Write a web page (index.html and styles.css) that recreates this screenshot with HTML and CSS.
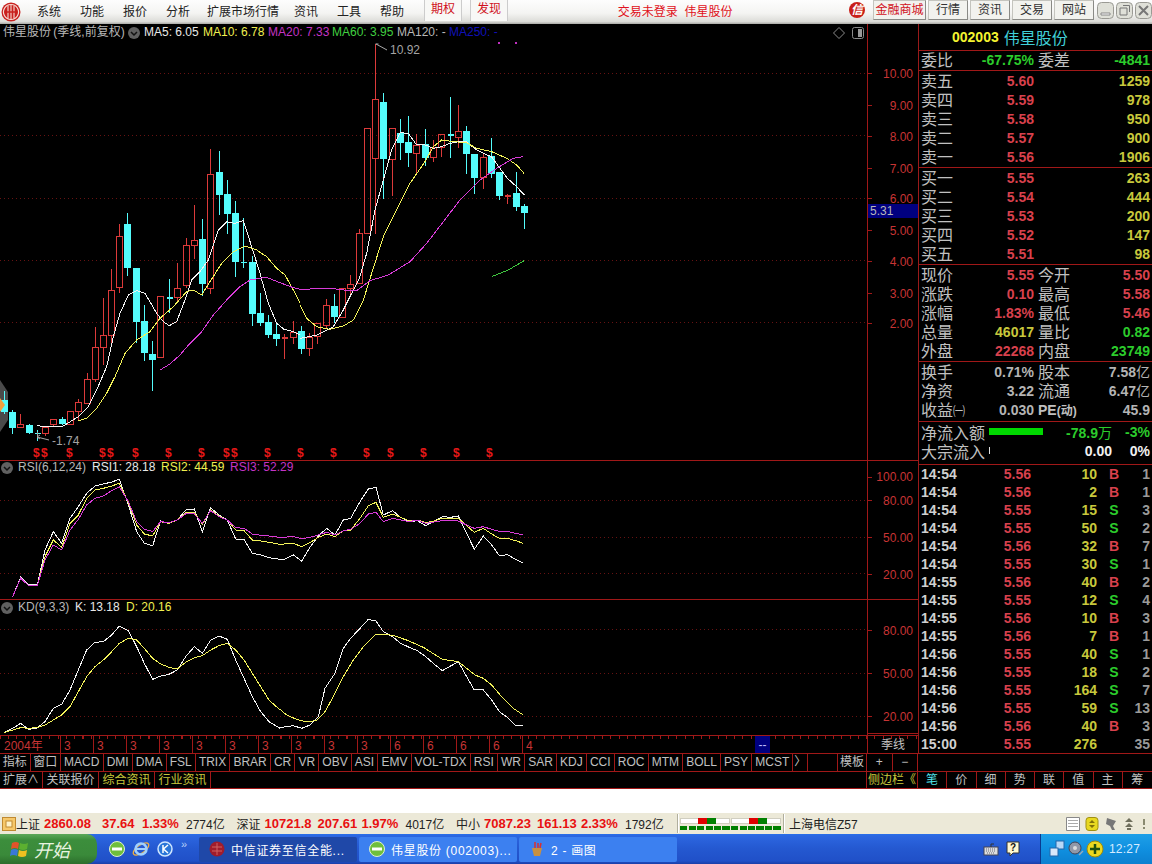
FILE: index.html
```html
<!DOCTYPE html>
<html lang="zh">
<head>
<meta charset="utf-8">
<title>伟星股份</title>
<link rel="stylesheet" href="styles.css">
</head>
<body>
<div class="app">
  <header class="menubar">
    <svg class="citic" viewBox="0 0 20 20" width="20" height="20"><circle cx="10" cy="10" r="9.500" fill="#c8201e"/><path d="M10 2.500a7.500 7.500 0 1 0 .01 0" fill="none" stroke="#f8dcd4" stroke-width="1.200"/><path d="M7 3.500v13M10 2.500v15M13 3.500v13" stroke="#f8dcd4" stroke-width="1.100" fill="none"/><path d="M3.500 10h13" stroke="#c8201e" stroke-width="1.500"/></svg>
    <nav class="menu">
      <span>系统</span><span>功能</span><span>报价</span><span>分析</span><span class="ext">扩展市场行情</span><span>资讯</span><span>工具</span><span>帮助</span>
    </nav>
    <span class="redtab first">期权</span><span class="redtab">发现</span>
    <span class="login">交易未登录&nbsp;&nbsp;伟星股份</span>
    <span class="xin">信</span>
    <span class="topbtn mall">金融商城</span><span class="topbtn">行情</span><span class="topbtn">资讯</span><span class="topbtn">交易</span><span class="topbtn">网站</span>
    <span class="winbtns">
      <svg class="winbtn" viewBox="0 0 17 17"><rect x=".5" y=".5" width="16" height="16" rx="4"/><path d="M4 11h9v2H4z" fill="#fff" stroke="#888"/></svg>
      <svg class="winbtn" viewBox="0 0 17 17"><rect x=".5" y=".5" width="16" height="16" rx="4"/><path d="M4 6h7v7H4zM7 3.500h6.500V10" fill="none" stroke="#777"/></svg>
      <svg class="winbtn" viewBox="0 0 17 17"><rect x=".5" y=".5" width="16" height="16" rx="4"/><path d="M4 4l9 9M13 4l-9 9" fill="none" stroke="#777" stroke-width="2"/></svg>
    </span>
  </header>

  <div class="workspace">
    <div class="left">
      <svg class="chart" viewBox="0 24 918 712" width="918" height="712">
        <!-- grid -->
        <g class="grid">
          <path d="M0 73.500H867M0 135.500H867M0 198.500H867M0 260.500H867M0 322.500H867"/>
          <path d="M0 500.500H867M0 537.500H867M0 573.500H867"/>
          <path d="M0 629.500H867M0 673.500H867M0 716.500H867"/>
        </g>
        <g class="rule">
          <path d="M0 460.500H918M0 599.500H918M0 735.500H918M867.500 24V735M868 733.500H918"/>
          <path d="M867 73.500h5M867 105.500h5M867 136.500h5M867 168.500h5M867 198.500h5M867 230.500h5M867 261.500h5M867 293.500h5M867 323.500h5M867 477.500h5M867 500.500h5M867 537.500h5M867 574.500h5M867 630.500h5M867 673.500h5M867 716.500h5"/>
        </g>

        <!-- left hide-panel handle -->
        <path d="M0 380L8 392V420L0 432Z" fill="#4a4a4a"/>

        <!-- candles -->
        <g transform="translate(.5 .5)" class="candles">
          <path class="up" d="M20 413V424M17 424h6v3h-6zM45 425V427M45 433V435M42 427h6v6h-6zM53 424V426M50 419h6v5h-6zM67 411h6v13h-6zM78 398V402M78 411V420M75 402h6v9h-6zM87 372V379M84 379h6v24h-6zM95 326V347M95 379V381M92 347h6v32h-6zM103 297V335M103 347V364M100 335h6v12h-6zM111 268V290M111 335V343M108 290h6v45h-6zM119 223V236M119 287V292M116 236h6v51h-6zM157 296h6v61h-6zM177 262V288M177 297V302M174 288h6v9h-6zM186 237V245M186 285V287M183 245h6v40h-6zM194 204V240M194 245V258M191 240h6v5h-6zM210 148V174M210 288V293M207 174h6v114h-6zM293 320V332M293 337V343M290 332h6v5h-6zM309 332V337M309 348V355M306 337h6v11h-6zM317 322V323M317 336V343M314 323h6v13h-6zM326 298V305M326 325V328M323 305h6v20h-6zM339 288h6v29h-6zM350 274V284M350 288V295M347 284h6v4h-6zM359 228V233M356 233h6v50h-6zM364 128h6v105h-6zM375 43V99M375 158V233M372 99h6v59h-6zM389 128h6v31h-6zM392 159V195M416 133V145M416 153V174M413 145h6v8h-6zM433 139V147M433 157V161M430 147h6v10h-6zM438 134h6v13h-6zM441 147V156M458 104V131M458 137V147M455 131h6v6h-6zM483 152V157M483 177V188M480 157h6v20h-6zM284 333V358M281 337h6M281 338h6M507 193V203M504 195h6M504 196h6"/>
          <path class="down" d="M4 390V413M1 400h6v11H1zM12 409V433M9 412h6v15H9zM29 423V433M26 425h6v7h-6zM62 416V424M59 419h6v4h-6zM127 212V275M124 224h6v43h-6zM136 267V342M133 268h6v53h-6zM144 304V360M141 321h6v31h-6zM152 340V390M149 354h6v5h-6zM202 218V295M199 239h6v44h-6zM219 150V214M216 172h6v22h-6zM227 179V233M224 194h6v19h-6zM235 200V276M232 213h6v48h-6zM252 255V325M249 262h6v51h-6zM260 292V325M257 313h6v9h-6zM268 314V337M265 322h6v12h-6zM276 323V345M273 334h6v4h-6zM301 325V353M298 331h6v17h-6zM334 293V322M331 306h6v10h-6zM383 92V198M380 102h6v56h-6zM400 118V159M397 133h6v9h-6zM408 115V166M405 142h6v10h-6zM425 128V165M422 144h6v13h-6zM466 125V173M463 131h6v22h-6zM474 154V193M471 154h6v23h-6zM491 137V177M488 156h6v17h-6zM499 172V199M496 172h6v23h-6zM516 171V210M513 193h6v13h-6zM524 203V228M521 206h6v6h-6zM37 429V440M34 433h6M169 278V312M166 297h6M166 298h6M243 217V267M240 262h6M450 96V157M447 134h6M447 135h6"/>
        </g>
        <path d="M0 398L5 405L0 412Z" fill="#f0a040"/>

        <!-- moving averages -->
        <g class="ln">
          <polyline class="white" transform="translate(0 60) scale(.33333)" points="110,1097 140,1100 190,1098 235,1070 265,1040 290,990 320,920 340,830 360,760 385,705 410,692 435,700 470,760 490,785 508,797 530,785 555,720 575,660 600,635 625,600 655,510 680,485 705,490 730,482 755,560 780,640 805,730 830,790 852,808 880,815 900,825"/>
          <polyline class="white" transform="translate(300 40) scale(.33333)" points="0,895 28,890 50,885 100,860 130,810 155,760 178,715 200,640 225,510 250,420 275,330 300,278 325,280 350,315 376,315 400,325 425,320 450,310 475,305 499,305 523,325 550,340 574,350 600,385 622,415 650,440 673,465"/>
          <polyline class="yellow" transform="translate(0 60) scale(.33333)" points="235,1082 260,1075 290,1045 320,1000 345,950 375,880 410,840 450,815 480,775 520,740 560,695 580,690 605,705 630,665 665,610 700,575 735,558 770,570 800,590 830,625 855,645 880,690 900,730"/>
          <polyline class="yellow" transform="translate(300 40) scale(.33333)" points="0,795 20,835 50,860 90,868 130,858 160,840 190,780 215,700 250,590 290,510 330,430 375,365 400,320 425,300 460,305 499,308 530,325 575,335 620,355 650,375 672,400"/>
          <polyline class="magenta" transform="translate(0 60) scale(.33333)" points="480,930 510,912 540,885 570,850 605,815 640,765 680,720 720,680 750,660 800,652 840,668 880,683 900,688"/>
          <polyline class="magenta" transform="translate(300 40) scale(.33333)" points="0,750 50,745 95,745 130,750 170,752 210,722 265,705 330,665 380,610 430,545 480,480 540,420 590,385 640,355 670,350"/>
          <polyline class="green" transform="translate(300 40) scale(.33333)" points="575,710 625,690 672,662"/>
        </g>

        <!-- RSI -->
        <g class="ln">
          <polyline class="white" transform="translate(0 460) scale(.33333)" points="38,410 62,352 85,375 112,375 135,270 160,215 185,250 210,175 235,140 260,100 285,78 310,72 335,66 358,58 385,135 410,215 433,250 458,257 482,183 507,190 532,180 557,150 583,147 607,215 632,143 657,165 682,180 707,237 732,238 757,280 782,285 807,293 840,298"/>
          <polyline class="white" transform="translate(280 460) scale(.33333)" points="0,298 15,297 40,285 65,303 90,262 115,228 140,205 165,225 190,180 212,175 240,125 265,87 288,82 310,165 338,152 362,172 388,185 412,182 437,197 462,183 487,170 512,172 535,168 560,220 583,268 610,228 635,255 658,287 682,284 707,298 730,310"/>
          <polyline class="yellow" transform="translate(0 460) scale(.33333)" points="38,410 62,355 85,376 112,376 135,290 160,240 185,262 210,190 235,165 260,115 285,90 310,85 335,78 358,70 385,128 410,195 433,222 458,228 482,185 507,190 532,180 557,158 583,157 607,193 632,150 657,168 682,180 707,210 732,212 757,240 782,243 807,247 840,253"/>
          <polyline class="yellow" transform="translate(280 460) scale(.33333)" points="0,253 40,250 65,260 90,248 115,232 140,222 165,230 190,212 212,210 240,175 265,137 288,127 310,172 338,162 362,172 388,183 412,180 437,188 462,183 487,175 512,175 535,175 560,197 583,217 610,205 635,222 658,235 682,235 707,242 730,250"/>
          <polyline class="magenta" transform="translate(0 460) scale(.33333)" points="38,410 62,355 85,376 112,376 135,300 160,255 185,270 210,210 235,178 260,135 285,115 310,108 335,92 358,80 385,125 410,185 433,208 458,214 482,185 507,188 532,180 557,162 583,162 607,190 632,152 657,170 682,180 707,203 732,205 757,222 782,226 807,228 840,232"/>
          <polyline class="magenta" transform="translate(280 460) scale(.33333)" points="0,232 40,230 65,236 90,232 115,225 140,217 165,225 190,212 212,208 240,190 265,162 288,157 310,185 338,175 362,180 388,185 412,180 437,190 462,186 487,182 512,183 535,183 560,195 583,205 610,200 635,208 658,214 682,214 707,220 730,225"/>
        </g>

        <!-- KD -->
        <g class="ln">
          <polyline class="white" transform="translate(0 460) scale(.33333)" points="12,818 38,805 62,790 85,808 110,805 135,785 160,745 185,733 210,690 235,630 260,570 285,547 310,545 335,525 358,498 385,512 410,560 433,610 458,658 482,648 507,643 532,630 557,590 583,560 607,580 632,540 657,528 682,538 707,600 732,655 757,710 782,755 807,785 840,805"/>
          <polyline class="white" transform="translate(280 460) scale(.33333)" points="0,803 40,797 65,805 90,795 115,770 135,685 165,640 190,565 212,535 240,505 265,478 288,483 310,515 338,530 362,550 388,562 412,572 437,590 462,612 487,632 512,618 535,605 560,650 583,690 610,690 635,720 658,755 682,772 707,797 730,797"/>
          <polyline class="yellow" transform="translate(0 460) scale(.33333)" points="12,818 38,810 62,803 85,805 110,803 135,795 160,780 185,765 210,740 235,695 260,650 285,620 310,600 335,575 358,550 385,535 410,540 433,565 458,595 482,612 507,622 532,627 557,607 583,593 607,587 632,570 657,557 682,550 707,570 732,600 757,640 782,680 807,720 840,750"/>
          <polyline class="yellow" transform="translate(280 460) scale(.33333)" points="0,748 20,765 50,778 75,785 110,782 135,755 160,710 190,650 220,600 250,560 285,525 315,522 345,528 385,542 430,562 487,598 535,605 585,645 610,655 635,675 665,710 700,745 730,765"/>
        </g>

        <!-- price extremes -->
        <path class="note" d="M375.500 44h3M376 44l11 6M37.500 432v5M37 437l12 3M37 437l3-2M37 437l3 2"/>
        <text class="t gray" x="390" y="54">10.92</text>
        <text class="t gray" x="52" y="445">-1.74</text>
        <path d="M498 42h2v2h-2zM515 42h2v2h-2z" fill="#c030c0"/>

        <!-- $ markers -->
        <g class="t dollar">
          <text x="33" y="457">$</text><text x="41" y="457">$</text><text x="66" y="457">$</text><text x="99" y="457">$</text><text x="107" y="457">$</text><text x="132" y="457">$</text><text x="165" y="457">$</text><text x="198" y="457">$</text><text x="223" y="457">$</text><text x="231" y="457">$</text><text x="264" y="457">$</text><text x="297" y="457">$</text><text x="330" y="457">$</text><text x="363" y="457">$</text><text x="387" y="457">$</text><text x="420" y="457">$</text><text x="453" y="457">$</text><text x="486" y="457">$</text>
        </g>

        <!-- titles -->
        <text class="t lbl tight" x="3" y="36">伟星股份 (季线,前复权)</text>
        <g><circle class="chev" cx="134" cy="33" r="6"/><path class="chevmark" d="M131 32l3 3 3-3"/></g>
        <text class="t white" x="144" y="36">MA5: 6.05</text>
        <text class="t yellow" x="203" y="36">MA10: 6.78</text>
        <text class="t magenta" x="268" y="36">MA20: 7.33</text>
        <text class="t green" x="332" y="36">MA60: 3.95</text>
        <text class="t lbl" x="397" y="36">MA120: -</text>
        <text class="t blue" x="449" y="36">MA250: -</text>
        <path class="glyphicon" d="M839 27.500l5.500 5.500-5.500 5.500-5.500-5.500z"/>
        <rect class="glyphicon" x="852.500" y="27.500" width="11" height="11" rx="2"/><rect x="858" y="29" width="4" height="8" fill="#999"/>

        <g><circle class="chev" cx="7" cy="468" r="6"/><path class="chevmark" d="M4 467l3 3 3-3"/></g>
        <text class="t lbl" x="18" y="471">RSI(6,12,24)</text>
        <text class="t white" x="92" y="471">RSI1: 28.18</text>
        <text class="t yellow" x="161" y="471">RSI2: 44.59</text>
        <text class="t magenta" x="230" y="471">RSI3: 52.29</text>

        <g><circle class="chev" cx="7" cy="608" r="6"/><path class="chevmark" d="M4 607l3 3 3-3"/></g>
        <text class="t lbl" x="18" y="611">KD(9,3,3)</text>
        <text class="t white" x="75" y="611">K: 13.18</text>
        <text class="t yellow" x="126" y="611">D: 20.16</text>

        <!-- axis -->
        <g class="t axis">
          <text x="913" y="78">10.00</text><text x="913" y="110">9.00</text><text x="913" y="141">8.00</text><text x="913" y="173">7.00</text><text x="913" y="203">6.00</text><text x="913" y="235">5.00</text><text x="913" y="266">4.00</text><text x="913" y="298">3.00</text><text x="913" y="328">2.00</text>
          <text x="913" y="481">100.00</text><text x="913" y="505">80.00</text><text x="913" y="542">50.00</text><text x="913" y="579">20.00</text>
          <text x="913" y="635">80.00</text><text x="913" y="678">50.00</text><text x="913" y="721">20.00</text>
        </g>
        <rect x="868" y="204" width="50" height="14" fill="#000080"/>
        <text class="t lbl" x="870" y="215">5.31</text>
      </svg>

      <div class="timeline">
        <span class="year">2004年</span>
        <span class="mark">3</span><span class="mark">3</span><span class="mark">3</span><span class="mark">3</span><span class="mark">3</span><span class="mark">3</span><span class="mark">3</span><span class="mark">3</span><span class="mark">3</span><span class="mark">3</span><span class="mark">6</span><span class="mark">6</span><span class="mark">6</span><span class="mark">6</span><span class="mark">4</span>
        <span class="cursor">--</span>
        <span class="period">季线</span>
      </div>
    </div>

    <aside class="panel">
      <div class="sym"><b>002003</b><span>伟星股份</span></div>
      <div class="q sep"><span>委比</span><b class="grn">-67.75%</b><span class="ml">委差</span><b class="grn">-4841</b></div>
      <section class="group sep">
        <div class="q"><span>卖五</span><b class="red">5.60</b><b class="yel v4">1259</b></div>
        <div class="q"><span>卖四</span><b class="red">5.59</b><b class="yel v4">978</b></div>
        <div class="q"><span>卖三</span><b class="red">5.58</b><b class="yel v4">950</b></div>
        <div class="q"><span>卖二</span><b class="red">5.57</b><b class="yel v4">900</b></div>
        <div class="q"><span>卖一</span><b class="red">5.56</b><b class="yel v4">1906</b></div>
      </section>
      <section class="group sep">
        <div class="q"><span>买一</span><b class="red">5.55</b><b class="yel v4">263</b></div>
        <div class="q"><span>买二</span><b class="red">5.54</b><b class="yel v4">444</b></div>
        <div class="q"><span>买三</span><b class="red">5.53</b><b class="yel v4">200</b></div>
        <div class="q"><span>买四</span><b class="red">5.52</b><b class="yel v4">147</b></div>
        <div class="q"><span>买五</span><b class="red">5.51</b><b class="yel v4">98</b></div>
      </section>
      <section class="group sep">
        <div class="q"><span>现价</span><b class="red">5.55</b><span class="ml">今开</span><b class="red">5.50</b></div>
        <div class="q"><span>涨跌</span><b class="red">0.10</b><span class="ml">最高</span><b class="red">5.58</b></div>
        <div class="q"><span>涨幅</span><b class="red">1.83%</b><span class="ml">最低</span><b class="red">5.46</b></div>
        <div class="q"><span>总量</span><b class="yel">46017</b><span class="ml">量比</span><b class="grn">0.82</b></div>
        <div class="q"><span>外盘</span><b class="red">22268</b><span class="ml">内盘</span><b class="grn">23749</b></div>
      </section>
      <section class="group sep pad1">
        <div class="q"><span>换手</span><b class="gry">0.71%</b><span class="ml">股本</span><b class="gry">7.58<i>亿</i></b></div>
        <div class="q"><span>净资</span><b class="gry">3.22</b><span class="ml">流通</span><b class="gry">6.47<i>亿</i></b></div>
        <div class="q"><span>收益<small>㈠</small></span><b class="gry">0.030</b><span class="ml pe">PE<small>(动)</small></span><b class="gry">45.9</b></div>
      </section>
      <section class="flowgroup sep">
        <div class="flow"><span>净流入额</span><em class="flowbar"></em><b class="grn amt">-78.9<i>万</i></b><b class="grn pct">-3%</b></div>
        <div class="flow"><span>大宗流入</span><em class="flowtick"></em><b class="wht amt">0.00</b><b class="wht pct">0%</b></div>
      </section>
      <section class="ticks">
        <div class="tick"><b>14:54</b><b class="red">5.56</b><b class="yel">10</b><b class="red c">B</b><b class="n">1</b></div>
        <div class="tick"><b>14:54</b><b class="red">5.56</b><b class="yel">2</b><b class="red c">B</b><b class="n">1</b></div>
        <div class="tick"><b>14:54</b><b class="red">5.55</b><b class="yel">15</b><b class="grn c">S</b><b class="n">3</b></div>
        <div class="tick"><b>14:54</b><b class="red">5.55</b><b class="yel">50</b><b class="grn c">S</b><b class="n">2</b></div>
        <div class="tick"><b>14:54</b><b class="red">5.56</b><b class="yel">32</b><b class="red c">B</b><b class="n">7</b></div>
        <div class="tick"><b>14:54</b><b class="red">5.55</b><b class="yel">30</b><b class="grn c">S</b><b class="n">1</b></div>
        <div class="tick"><b>14:55</b><b class="red">5.56</b><b class="yel">40</b><b class="red c">B</b><b class="n">2</b></div>
        <div class="tick"><b>14:55</b><b class="red">5.55</b><b class="yel">12</b><b class="grn c">S</b><b class="n">4</b></div>
        <div class="tick"><b>14:55</b><b class="red">5.56</b><b class="yel">10</b><b class="red c">B</b><b class="n">3</b></div>
        <div class="tick"><b>14:55</b><b class="red">5.56</b><b class="yel">7</b><b class="red c">B</b><b class="n">1</b></div>
        <div class="tick"><b>14:56</b><b class="red">5.55</b><b class="yel">40</b><b class="grn c">S</b><b class="n">1</b></div>
        <div class="tick"><b>14:56</b><b class="red">5.55</b><b class="yel">18</b><b class="grn c">S</b><b class="n">2</b></div>
        <div class="tick"><b>14:56</b><b class="red">5.55</b><b class="yel">164</b><b class="grn c">S</b><b class="n">7</b></div>
        <div class="tick"><b>14:56</b><b class="red">5.55</b><b class="yel">59</b><b class="grn c">S</b><b class="n">13</b></div>
        <div class="tick"><b>14:56</b><b class="red">5.56</b><b class="yel">40</b><b class="red c">B</b><b class="n">3</b></div>
        <div class="tick"><b>15:00</b><b class="red">5.55</b><b class="yel">276</b><b class="c"></b><b class="n">35</b></div>
      </section>
    </aside>
  </div>

  <div class="tabrow tabs1">
    <span class="cn">指标</span><span class="cn">窗口</span><span class="en">MACD</span><span class="en">DMI</span><span class="en">DMA</span><span class="en">FSL</span><span class="en">TRIX</span><span class="en">BRAR</span><span class="en">CR</span><span class="en">VR</span><span class="en">OBV</span><span class="en">ASI</span><span class="en">EMV</span><span class="en">VOL-TDX</span><span class="en">RSI</span><span class="en">WR</span><span class="en">SAR</span><span class="en">KDJ</span><span class="en">CCI</span><span class="en">ROC</span><span class="en">MTM</span><span class="en">BOLL</span><span class="en">PSY</span><span class="en">MCST</span><span class="more">〉</span><span class="blank"></span><span class="tpl">模板</span><span class="pm">+</span><span class="pm">−</span><span class="rest"></span>
  </div>
  <div class="tabrow tabs2">
    <span class="w43">扩展∧</span><span class="w56">关联报价</span><span class="w56 ylw">综合资讯</span><span class="w56 ylw">行业资讯</span><span class="blank nb"></span><span class="side ylw">侧边栏《</span><span class="p cy">笔</span><span class="p">价</span><span class="p">细</span><span class="p">势</span><span class="p">联</span><span class="p">值</span><span class="p">主</span><span class="p">筹</span>
  </div>

  <div class="blankstrip"></div>

  <footer class="status">
    <svg class="sicon" viewBox="0 0 14 14" width="14" height="14"><rect x=".5" y=".5" width="13" height="13" fill="#f6c86a" stroke="#c08a30"/><rect x="4" y="4" width="6" height="6" fill="#fff3c8" stroke="#c08a30"/></svg>
    <span class="name n1">上证</span><b class="idx w58">2860.08</b><b class="idx w40">37.64</b><b class="idx w44">1.33%</b><span class="vol">2774亿</span>
    <span class="name">深证</span><b class="idx w53">10721.8</b><b class="idx w44">207.61</b><b class="idx w44">1.97%</b><span class="vol">4017亿</span>
    <span class="name">中小</span><b class="idx w53">7087.23</b><b class="idx w44">161.13</b><b class="idx w44">2.33%</b><span class="vol">1792亿</span>
    <span class="vsep"></span>
    <span class="mini"><span class="mtop"><i class="mr"></i><i class="mg"></i></span><span class="mbot"></span></span>
    <span class="mini"><span class="mtop"><i class="mr"></i><i class="mg"></i></span><span class="mbot"></span></span>
    <span class="vsep v2"></span>
    <span class="line">上海电信Z57</span>
    <span class="sright">
      <svg viewBox="0 0 14 14" width="14" height="14"><path d="M.5 .5h13v13H.5z" fill="#fff" stroke="#888"/><path d="M2 3.500h10M2 6.500h10M2 9.500h10" stroke="#aaa"/></svg>
      <svg viewBox="0 0 14 14" width="14" height="14"><rect x="1" y=".5" width="12" height="13" rx="3" fill="#e8d820" stroke="#a09010"/><path d="M7 3l3 3H4zM7 11L4 8h6z" fill="#807008"/></svg>
      <svg viewBox="0 0 14 14" width="14" height="14"><path d="M3 1l9 3-3 5 2 4H8L6 9 2 7z" fill="#777"/></svg>
      <svg viewBox="0 0 12 14" width="12" height="14"><path d="M6 1l4 4H2zM6 6l4 4H2zM4 11h4v2H4z" fill="#6f6f5c"/></svg>
      <svg viewBox="0 0 8 14" width="8" height="14"><path d="M3 2h2v6H3zM3 10h2v2H3z" fill="#8a8a70"/></svg>
    </span>
  </footer>

  <footer class="taskbar">
    <button class="start">
      <svg viewBox="0 0 20 20" width="20" height="20"><path d="M2 4q4-2 7 0l-1 6q-3-2-7 0z" fill="#e2532a"/><path d="M10 4q4 2 8 0l-1 6q-4 2-8 0z" fill="#5cb030"/><path d="M1 11q3-2 7 0l-1 6q-4-2-7 0z" fill="#3a78d8"/><path d="M9 11q4 2 8 0l-1 6q-4 2-8 0z" fill="#f0c020"/></svg>
      <span>开始</span>
    </button>
    <span class="quick">
      <svg viewBox="0 0 16 16" width="16" height="16"><circle cx="8" cy="8" r="7.500" fill="#6fbf3c" stroke="#dff2cf"/><path d="M3 8h10" stroke="#fff" stroke-width="3"/></svg>
      <svg viewBox="0 0 18 18" width="18" height="18"><ellipse cx="9" cy="9" rx="9" ry="4" fill="none" stroke="#f0b040" stroke-width="1.300" transform="rotate(-35 9 9)"/><circle cx="9" cy="9" r="5.500" fill="none" stroke="#9fd0ff" stroke-width="2.500"/><path d="M4 9h10" stroke="#9fd0ff" stroke-width="2"/></svg>
      <svg viewBox="0 0 16 16" width="16" height="16"><circle cx="8" cy="8" r="7" fill="#2a76d8" stroke="#cfe6ff" stroke-width="1.500"/><path d="M6 4v8M11 4L6.500 8 11 12" fill="none" stroke="#fff" stroke-width="1.500"/></svg>
      <span class="chevrons">»</span>
    </span>
    <span class="task pressed"><svg viewBox="0 0 16 16" width="16" height="16"><circle cx="8" cy="8" r="7.500" fill="#a01c2c"/><path d="M8 2v12M3 6h10M3 10h10" stroke="#d06060"/></svg><span>中信证券至信全能...</span></span>
    <span class="task"><svg viewBox="0 0 16 16" width="16" height="16"><circle cx="8" cy="8" r="7.500" fill="#6fbf3c" stroke="#dff2cf"/><path d="M3 8h10" stroke="#fff" stroke-width="3"/></svg><span>伟星股份 (002003)...</span></span>
    <span class="task"><svg viewBox="0 0 16 16" width="16" height="16"><path d="M3 7h10l-2 8H5z" fill="#c89040"/><path d="M6 7V1M9 7V2M11 7L12 2" stroke="#d83030" stroke-width="1.500"/></svg><span>2 - 画图</span></span>
    <span class="tbright">
      <svg viewBox="0 0 16 16" width="16" height="16"><rect x="1" y="6" width="14" height="8" fill="#ddd" stroke="#445"/><path d="M3 8h10M3 10h10M4 12h8" stroke="#667" stroke-dasharray="1 1"/><path d="M8 6V3h3" stroke="#333" fill="none"/></svg>
      <svg viewBox="0 0 14 16" width="14" height="16"><path d="M1 1h12v11H7l-3 3v-3H1z" fill="#fff8d0" stroke="#333"/><text class="qm" x="7" y="10">?</text></svg>
    </span>
    <span class="tray">
      <svg viewBox="0 0 18 18" width="18" height="18"><rect x="8" y="1" width="8" height="8" fill="#b8d8f8" stroke="#26a"/><rect x="2" y="8" width="8" height="8" fill="#d8e8fa" stroke="#26a"/></svg>
      <svg viewBox="0 0 18 18" width="18" height="18"><circle cx="8" cy="8" r="6" fill="#9098a8" stroke="#445"/><circle cx="8" cy="8" r="2" fill="#ddd"/><path d="M12 15l4-4" stroke="#9ab" stroke-width="1.500"/></svg>
      <svg viewBox="0 0 18 18" width="18" height="18"><circle cx="9" cy="9" r="8" fill="#ecd820" stroke="#9a8a10"/><path d="M9 4v10M4 9h10" stroke="#205010" stroke-width="2.500"/></svg>
      <span class="clock">12:27</span>
    </span>
  </footer>
</div>
</body>
</html>
```

FILE: styles.css
```css
* { box-sizing: border-box; }
html, body { margin: 0; padding: 0; background: #000; }
.app {
  width: 1152px; height: 864px; overflow: hidden; display: flex; flex-direction: column;
  font-family: "Liberation Sans", "Noto Sans CJK SC", sans-serif; font-size: 12px;
}

/* top menu */
.menubar {
  height: 24px; flex: none; display: flex; align-items: center; padding: 0 0 4px 1px;
  background: linear-gradient(#fdfdfd 0, #f4f4f2 55%, #dcdcd8 90%, #a8a8a4 100%); color: #222;
}
.citic { flex: none; margin-top: 3px; }
.menu { display: flex; margin-left: 16px; gap: 19px; }
.menu span { white-space: nowrap; }
.menu .ext { margin: 0 -4px 0 -2px; }
.redtab {
  height: 22px; width: 38px; margin: -2px 0 -2px 8px; line-height: 20px; text-align: center;
  color: #d01020; border-left: 1px solid #ccc; border-right: 1px solid #ccc; background: #f8f8f6;
}
.redtab.first { margin-left: 20px; }
.login { margin-left: 110px; width: 232px; color: #e01020; white-space: nowrap; }
.xin {
  width: 16px; height: 16px; line-height: 16px; border-radius: 50%; background: #c81e18; color: #fff;
  font-weight: bold; font-style: italic; font-size: 12px; text-align: center; margin-right: 8px; flex: none;
}
.topbtn {
  width: 40px; height: 20px; margin-right: 2px; line-height: 18px; text-align: center; flex: none;
  background: #f2f2ee; border: 1px solid #c4c4be; border-right-color: #8a8a86; border-bottom-color: #8a8a86; color: #333;
}
.topbtn.mall { width: 53px; color: #d01020; }
.winbtns { display: flex; gap: 2px; margin-left: 1px; }
.winbtn { width: 17px; height: 17px; }
.winbtn rect { fill: #dfe0d8; stroke: #9a9a94; }

/* workspace */
.workspace { display: flex; height: 729px; flex: none; background: #000; overflow: hidden; }
.left { width: 918px; flex: none; }
.chart { display: block; background: #000; }
.panel { width: 234px; flex: none; border-left: 1px solid #9a1a1a; color: #c0c0c0; }

.grid path { stroke: #661212; stroke-width: 1; stroke-dasharray: 1 3; fill: none; shape-rendering: crispEdges; }
.rule path { stroke: #a01818; stroke-width: 1; fill: none; shape-rendering: crispEdges; }
.candles path { stroke-width: 1; shape-rendering: crispEdges; }
.up { fill: none; stroke: #dc3a3a; }
.down { fill: #54fcfc; stroke: #54fcfc; }
.ln polyline { fill: none; stroke-width: 1; vector-effect: non-scaling-stroke; shape-rendering: crispEdges; }
polyline.white { stroke: #f4f4f4; }
polyline.yellow { stroke: #f4f45a; }
polyline.magenta { stroke: #d83cd8; }
polyline.green { stroke: #3fc83f; }
.note { stroke: #a8a8a8; fill: none; stroke-width: 1; }
.t { font-family: "Liberation Sans", "Noto Sans CJK SC", sans-serif; font-size: 12px; }
.tight { word-spacing: -1px; }
text.white { fill: #e8e8e8; }
text.yellow { fill: #f0f050; }
text.magenta { fill: #c434c4; }
text.green { fill: #40d040; }
text.blue { fill: #1010b8; }
text.lbl { fill: #b8b8b8; }
text.gray { fill: #a4a4a4; }
.axis text { fill: #c83434; text-anchor: end; }
.dollar text { fill: #e81818; font-weight: bold; font-size: 12px; }
.chev { fill: #606060; }
.chevmark { stroke: #111; stroke-width: 1.500; fill: none; }
.glyphicon { fill: none; stroke: #8a8a8a; stroke-width: 1; }

/* timeline */
.timeline {
  height: 17px; width: 918px; display: flex; color: #c83434; line-height: 20px; overflow: hidden;
  background-image: repeating-linear-gradient(90deg, #a01818 0 1px, transparent 1px 8.25px);
  background-size: 100% 3px; background-repeat: no-repeat;
}
.year { width: 60px; padding-left: 4px; font-size: 12px; flex: none; }
.mark { width: 33px; flex: none; border-left: 1px solid #a01818; padding-left: 3px; }
.cursor { margin-left: 200px; width: 15px; flex: none; background: #000080; color: #c0c0ff; text-align: center; line-height: 18px; }
.period { margin-left: 97px; flex: 1; color: #c0c0c0; text-align: center; border-left: 1px solid #a01818; line-height: 18px; }

/* quote panel */
.sym { height: 27px; border-bottom: 1px solid #a01818; padding-left: 33px; display: flex; align-items: center; gap: 5px; }
.sym b { color: #f4f430; font-size: 14px; }
.sym span { color: #40d0d8; font-size: 16px; }
.sep { border-bottom: 1px solid #a01818; }
.group { padding-top: 1px; }
.pad1 { padding-bottom: 1px; }
.flowgroup { padding-bottom: 4px; }
.q {
  display: grid; grid-template-columns: 32px 81px 38px 1fr; height: 19px; line-height: 19px;
  padding: 0 2px; white-space: nowrap;
}
.q > span { font-size: 16px; }
.q > b { text-align: right; font-size: 14px; }
.q.sep { height: 20px; }
.ml { padding-left: 4px; }
.v4 { grid-column: 4; }
.q > .pe { font-weight: bold; font-size: 14px; color: #c0c0c0; white-space: nowrap; }
.pe small { font-size: 12px; }
.q small { font-size: 12px; }
.q i, .amt i { font-style: normal; font-weight: normal; font-size: 14px; }
.red { color: #d8414d; }
.grn { color: #2ccc2c; }
.yel { color: #c8c83c; }
.gry { color: #b4b4b4; }
.wht { color: #f0f0f0; }

.flow { display: flex; align-items: center; height: 19px; padding-left: 2px; white-space: nowrap; }
.flow > span { font-size: 16px; width: 68px; flex: none; }
.flow b { font-size: 14px; text-align: right; }
.flowbar { width: 54px; height: 7px; background: #00d800; flex: none; }
.flowtick { width: 54px; height: 7px; flex: none; border-left: 1px solid #e0e0e0; }
.amt { width: 69px; flex: none; }
.pct { width: 38px; flex: none; }
.tick {
  display: grid; grid-template-columns: 60px 50px 66px 34px 1fr; height: 18px; line-height: 18px;
  padding: 0 2px; font-size: 14px; white-space: nowrap;
}
.tick b { text-align: right; color: inherit; }
.tick b:first-child { text-align: left; color: #d0d0d0; }
.tick b.red { color: #d8414d; }
.tick b.yel { color: #c8c83c; }
.tick b.grn { color: #2ccc2c; }
.tick b.c { text-align: center; }
.tick b.n { color: #9a9a9a; font-weight: bold; }

/* tab rows */
.tabrow {
  display: flex; height: 18px; flex: none; background: #000; color: #c0c0c0; line-height: 17px;
  border-top: 1px solid #a01818; white-space: nowrap;
}
.tabs2 { border-bottom: 1px solid #a01818; line-height: 16px; }
.tabrow > span { border-right: 1px solid #a01818; text-align: center; flex: none; }
.tabs1 .cn { width: 30.500px; }
.tabs1 .en { padding: 0 3.100px; }
.tabs1 .more { width: 15px; }
.tabrow .blank { flex: 1; min-width: 0; }
.tabrow .nb { border-right: 0; }
.tabs1 .tpl { width: 29px; }
.tabs1 .pm { width: 25.500px; }
.tabs1 .rest { width: 234px; border-right: 0; }
.w43 { width: 43px; }
.w56 { width: 56px; }
.ylw { color: #c8c83c; }
.tabrow .side { width: 52px; border-left: 1px solid #a01818; }
.tabrow .p { width: 29.250px; }
.tabrow .p:last-child { border-right: 0; }
.cy { color: #50e0e8; }

.blankstrip { flex: none; height: 24px; background: #fff; }

/* status bar */
.status {
  height: 21px; flex: none; display: flex; align-items: center; background: #ece9d8; color: #222; padding-left: 2px; white-space: nowrap;
}
.sicon { flex: none; }
.name { margin-left: 14.500px; width: 28px; flex: none; }
.name.n1 { margin-left: 0; }
.idx { color: #e81010; font-size: 13px; flex: none; }
.w58 { width: 58px; }
.w53 { width: 53px; }
.w40 { width: 40px; }
.w44 { width: 44px; }
.vol { width: 36px; flex: none; }
.vsep { width: 2px; height: 19px; margin: 0 1px 0 16px; border-left: 1px solid #b0ae9c; border-right: 1px solid #fff; flex: none; }
.vsep.v2 { margin: 0 4px 0 1px; }
.mini { width: 50px; margin-right: 1px; display: flex; flex-direction: column; gap: 2px; flex: none; }
.mtop { height: 6px; display: flex; justify-content: center; background: #fff; border: 1px solid #d0cec0; padding-left: 3px; }
.mr { width: 9px; margin-top: -1px; height: 6px; background: #e00000; }
.mg { width: 9px; margin-top: -1px; height: 6px; background: #008000; }
.mbot { height: 4px; background: repeating-linear-gradient(90deg, #008000 0 7px, transparent 7px 8.500px); }
.sright { margin-left: auto; display: flex; align-items: center; gap: 5px; padding-right: 4px; }

/* taskbar */
.taskbar {
  height: 30px; flex: none; display: flex; align-items: center; color: #fff;
  background: linear-gradient(#2a6fe8 0, #2c66e0 8%, #2458d0 50%, #2050c8 90%, #1a3fa8 100%);
}
.start {
  width: 97px; height: 30px; border: 0; padding: 0 0 0 10px; display: flex; align-items: center; gap: 4px; flex: none;
  background: linear-gradient(#5ca85a 0, #3c8e3c 20%, #3a8a3a 70%, #2c6e2c 100%);
  border-radius: 0 10px 10px 0; color: #e8f4e0;
  font-family: inherit; font-style: italic; font-size: 18px;
}
.quick { display: flex; align-items: center; gap: 7px; margin-left: 12px; width: 90px; flex: none; }
.chevrons { font-size: 11px; color: #b8d0f8; margin: -10px 0 0 1px; }
.task {
  width: 158px; height: 25px; margin-right: 2px; display: flex; align-items: center; gap: 6px; padding-left: 10px; flex: none;
  background: #3c80f0; border-radius: 2px; font-size: 12px; white-space: nowrap; letter-spacing: .7px;
}
.task.pressed { background: #1f48a8; }
.tbright { margin-left: auto; display: flex; gap: 7px; align-items: center; margin-right: 20px; }
.qm { font: bold 10px "Liberation Sans", sans-serif; text-anchor: middle; fill: #111; }
.tray {
  width: 112px; height: 30px; flex: none; display: flex; align-items: center; gap: 1px; padding-left: 7px;
  background: linear-gradient(#1ea0e8, #1090e0 50%, #0c80d0); border-left: 1px solid #0a3a90; color: #d8ecff;
}
.clock { margin-left: 4px; letter-spacing: .2px; }
```
